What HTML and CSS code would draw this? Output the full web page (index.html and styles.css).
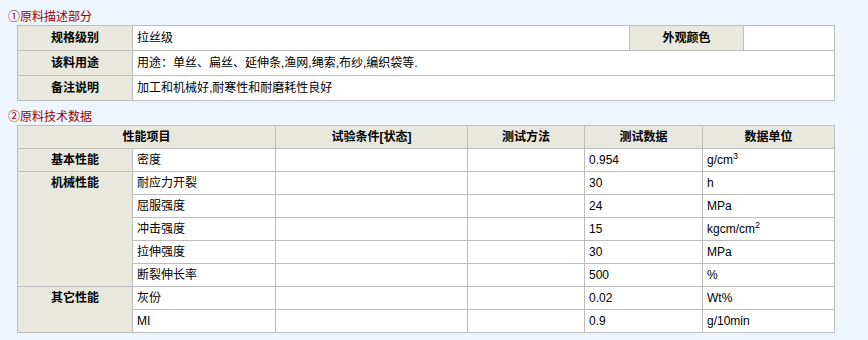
FILE: index.html
```html
<!DOCTYPE html>
<html lang="zh">
<head>
<meta charset="utf-8">
<title>原料</title>
<link rel="stylesheet" href="styles.css">
</head>
<body>
<div class="page">
  <div class="sec-title first">①原料描述部分</div>
  <table class="grid desc">
    <colgroup><col class="d1"><col class="d2"><col class="d3"><col class="d4"></colgroup>
    <tr><th class="lab">规格级别</th><td>拉丝级</td><th class="lab">外观颜色</th><td></td></tr>
    <tr><th class="lab">该料用途</th><td colspan="3">用途：单丝、扁丝、延伸条,渔网,绳索,布纱,编织袋等.</td></tr>
    <tr><th class="lab">备注说明</th><td colspan="3">加工和机械好,耐寒性和耐磨耗性良好</td></tr>
  </table>
  <div class="sec-title">②原料技术数据</div>
  <table class="grid tech">
    <colgroup><col class="t1"><col class="t2"><col class="t3"><col class="t4"><col class="t5"><col class="t6"></colgroup>
    <tr class="head"><th colspan="2">性能项目</th><th>试验条件[状态]</th><th>测试方法</th><th>测试数据</th><th>数据单位</th></tr>
    <tr><th class="lab">基本性能</th><td>密度</td><td></td><td></td><td>0.954</td><td>g/cm<sup>3</sup></td></tr>
    <tr><th class="lab" rowspan="5">机械性能</th><td>耐应力开裂</td><td></td><td></td><td>30</td><td>h</td></tr>
    <tr><td>屈服强度</td><td></td><td></td><td>24</td><td>MPa</td></tr>
    <tr><td>冲击强度</td><td></td><td></td><td>15</td><td>kgcm/cm<sup>2</sup></td></tr>
    <tr><td>拉伸强度</td><td></td><td></td><td>30</td><td>MPa</td></tr>
    <tr><td>断裂伸长率</td><td></td><td></td><td>500</td><td>%</td></tr>
    <tr><th class="lab" rowspan="2">其它性能</th><td>灰份</td><td></td><td></td><td>0.02</td><td>Wt%</td></tr>
    <tr><td>MI</td><td></td><td></td><td>0.9</td><td>g/10min</td></tr>
  </table>
</div>
</body>
</html>
```
FILE: styles.css
```css
html, body {
  margin: 0;
  padding: 0;
  background: #eef5fc;
}
body {
  font-family: "Liberation Sans", "Noto Sans CJK SC", sans-serif;
  font-size: 12px;
  color: #000;
}
.page {
  padding-left: 8px;
}
.sec-title {
  color: #990000;
  line-height: 16px;
  height: 16px;
  padding-top: 8px;
}
.sec-title.first {
  padding-top: 9px;
}
.grid {
  border-collapse: collapse;
  table-layout: fixed;
  width: 818px;
  margin-left: 9px;
  background: #fff;
}
.grid th, .grid td {
  border: 1px solid #bdbdbd;
  padding: 0 4px;
  text-align: left;
  font-weight: normal;
  white-space: nowrap;
  overflow: hidden;
}
.grid th.lab, .grid .head th {
  background: #e8e8de;
  font-weight: bold;
  text-align: center;
}
.desc th, .desc td {
  line-height: 24px;
  height: 24px;
}
.tech th, .tech td {
  line-height: 22px;
  height: 22px;
}
.tech th.lab {
  vertical-align: top;
}
.d1 { width: 115px; }
.d2 { width: 497px; }
.d3 { width: 114px; }
.d4 { width: 91px; }
.t1 { width: 115px; }
.t2 { width: 143px; }
.t3 { width: 192px; }
.t4 { width: 117px; }
.t5 { width: 118px; }
.t6 { width: 132px; }
sup {
  font-size: 9px;
  line-height: 0;
  vertical-align: 5px;
}
```
